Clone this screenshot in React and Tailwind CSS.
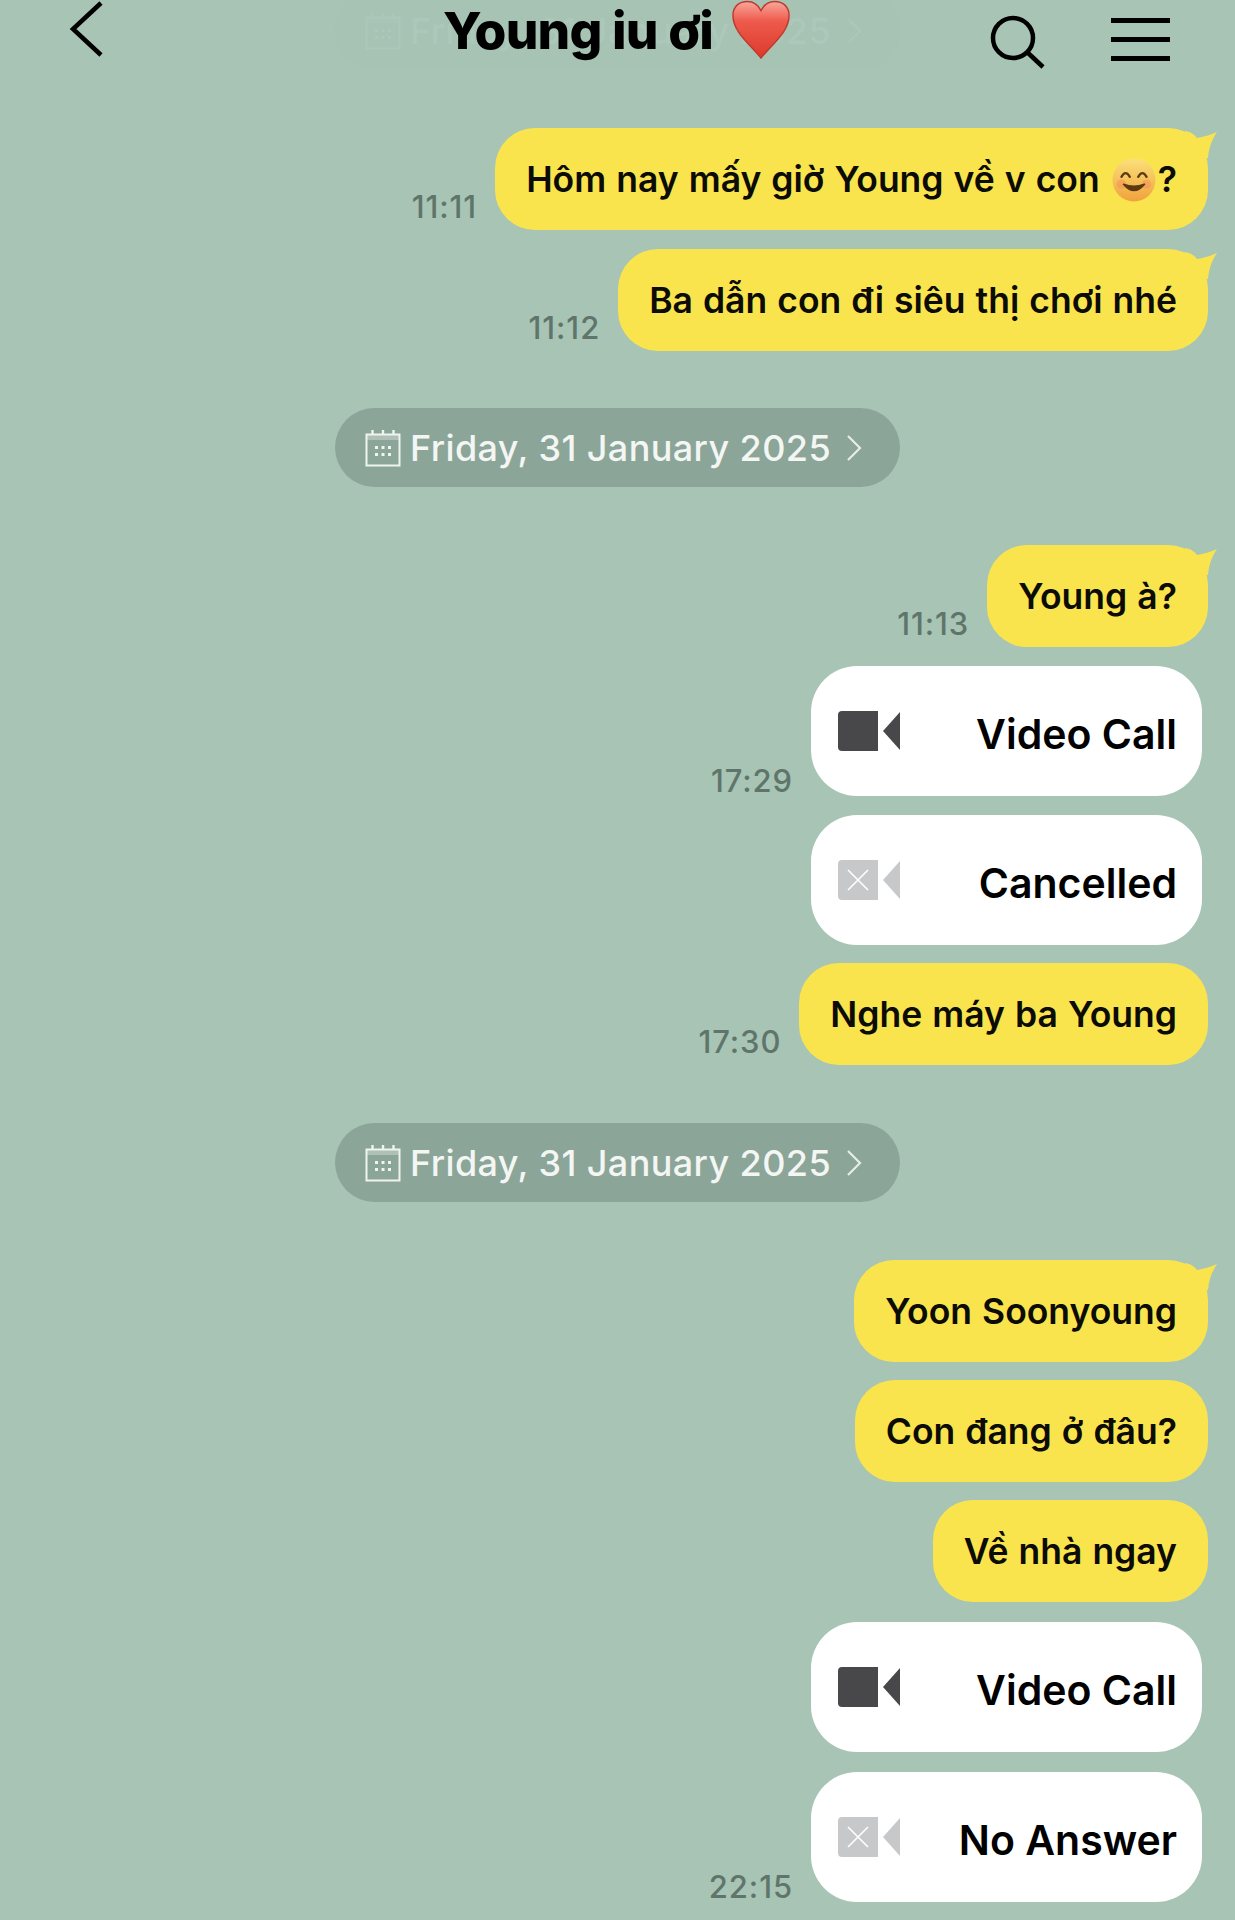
import React from "react";

function Tail() {
  return (
    <svg className="absolute right-[-9px] top-0" width="32" height="30" viewBox="0 0 32 30">
      <path d="M0 3 C6 4 10 7 12 10 C18 9 26 7 32 4 C28 10 24 18 23 30 L0 30 Z" fill="#fae44e" />
    </svg>
  );
}

function Time({ children, call }) {
  return (
    <span className={`text-[31px] leading-[36px] font-medium tracking-[0.9px] text-[#5f756b] mr-[18px] ${call ? "mb-[-3px]" : "mb-[5px]"}`}>
      {children}
    </span>
  );
}

function Bubble({ time, tail, mt, children }) {
  return (
    <div className={`flex justify-end items-end pr-[27px] ${mt}`}>
      {time && <Time>{time}</Time>}
      <div className="relative h-[102px] flex items-center px-[31px] rounded-[40px] bg-[#fae44e] text-[35.5px] font-semibold [word-spacing:1.1px] text-[#0c0c07] whitespace-nowrap">
        {tail && <Tail />}
        <span className="mt-[2px]">{children}</span>
      </div>
    </div>
  );
}

function CameraIcon({ off }) {
  const fill = off ? "#c6c8ca" : "#48484a";
  return (
    <svg width="64" height="42" viewBox="0 0 64 42">
      <path d="M5 1 H41 V41 H5 Q1 41 1 37 V5 Q1 1 5 1 Z" fill={fill} />
      <path d="M63 2 V40 L46 21 Z" fill={fill} strokeLinejoin="round" />
      {off && <path d="M11 11 L31 31 M31 11 L11 31" stroke="#fff" strokeWidth="1.6" />}
    </svg>
  );
}

function CallCard({ time, off, mt, children }) {
  return (
    <div className={`flex justify-end items-end pr-[33px] ${mt}`}>
      {time && <Time call>{time}</Time>}
      <div className="h-[130px] w-[391px] flex items-center justify-between pl-[26px] pr-[25px] rounded-[46px] bg-white text-[41px] font-semibold text-black">
        <CameraIcon off={off} />
        <span className="mt-[8px] whitespace-nowrap">{children}</span>
      </div>
    </div>
  );
}

function CalendarIcon({ color = "#f0f4f0" }) {
  return (
    <svg width="36" height="38" viewBox="0 0 36 38" fill="none">
      <path d="M1.5 5.5 H34.5 V36.5 H1.5 Z" stroke={color} strokeWidth="2" />
      <path d="M1.5 5.5 H34.5 V11 H1.5 Z" fill={color} fillOpacity="0.35" />
      <path d="M7.5 1 V6 M18 1 V6 M28.5 1 V6" stroke={color} strokeWidth="2.4" />
      <path
        d="M10 17 h3 v3 h-3 Z M16.5 17 h3 v3 h-3 Z M23 17 h3 v3 h-3 Z M10 24 h3 v3 h-3 Z M16.5 24 h3 v3 h-3 Z M23 24 h3 v3 h-3 Z"
        fill={color}
      />
    </svg>
  );
}

function DatePill({ mt }) {
  return (
    <div className={`flex justify-center ${mt}`}>
      <div className="h-[79px] w-[565px] flex items-center pl-[30px] rounded-[40px] bg-[#8ba599] text-[36px] font-medium tracking-[0.4px] text-[#f3f6f3]">
        <CalendarIcon />
        <span className="ml-[9px] whitespace-nowrap">Friday, 31 January 2025</span>
        <svg className="ml-[15px]" width="16" height="28" viewBox="0 0 16 28" fill="none">
          <path d="M2 2 L14 14 L2 26" stroke="#e6ede8" strokeWidth="2.2" />
        </svg>
      </div>
    </div>
  );
}

function Heart() {
  return (
    <svg width="58" height="60" viewBox="0 0 60 62">
      <defs>
        <linearGradient id="heartFill" x1="0" y1="0" x2="0" y2="1">
          <stop offset="0" stopColor="#f9a79b" />
          <stop offset="0.35" stopColor="#ee5a4c" />
          <stop offset="1" stopColor="#dc3a2c" />
        </linearGradient>
      </defs>
      <path
        d="M30 60 C18 45 1 33 1 16 C1 6 8 1.500 16 1.500 C22 1.500 27 5 30 11 C33 5 38 1.500 44 1.500 C52 1.500 59 6 59 16 C59 33 42 45 30 60 Z"
        fill="url(#heartFill)"
        stroke="#bf3a2e"
        strokeWidth="1.5"
      />
    </svg>
  );
}

function Smiley() {
  return (
    <svg className="inline-block align-[-10px] ml-[12px] mr-[2px]" width="44" height="44" viewBox="0 0 42 42">
      <defs>
        <linearGradient id="smileFill" x1="0" y1="0" x2="0" y2="1">
          <stop offset="0" stopColor="#fbe07a" />
          <stop offset="1" stopColor="#f0a23c" />
        </linearGradient>
      </defs>
      <circle cx="21" cy="21" r="20.5" fill="url(#smileFill)" />
      <circle cx="9" cy="25" r="4.5" fill="#f48a5a" opacity="0.45" />
      <circle cx="33" cy="25" r="4.5" fill="#f48a5a" opacity="0.45" />
      <path d="M9 18 Q13 11 17 18 M25 18 Q29 11 33 18" stroke="#5d3a12" strokeWidth="2.2" fill="none" strokeLinecap="round" />
      <path d="M11 25 Q21 37 31 25 Q21 29 11 25 Z" fill="#5d3a12" stroke="#5d3a12" strokeWidth="1.5" strokeLinejoin="round" />
    </svg>
  );
}

function Header() {
  return (
    <div className="relative h-[128px] text-black">
      {/* the date pill scrolling away under the translucent bar */}
      <div className="absolute left-[335px] top-[-9px] h-[79px] w-[565px] flex items-center pl-[30px] rounded-[40px] bg-[#a6c3b4] text-[36px] font-medium tracking-[0.4px] text-[#acc8ba]">
        <CalendarIcon color="#acc8ba" />
        <span className="ml-[9px] whitespace-nowrap">Friday, 31 January 2025</span>
        <svg className="ml-[15px]" width="16" height="28" viewBox="0 0 16 28" fill="none">
          <path d="M2 2 L14 14 L2 26" stroke="#acc8ba" strokeWidth="2.2" />
        </svg>
      </div>
      <svg className="absolute left-[68px] top-0" width="38" height="58" viewBox="0 0 38 58" fill="none">
        <path d="M33 3 L5 29 L33 55" stroke="#000" strokeWidth="4.5" />
      </svg>
      <div className="absolute left-[443px] top-0 flex items-center gap-[19px] text-[51.5px] leading-[60px] font-extrabold tracking-[-0.8px] whitespace-nowrap">
        <span>Young iu ơi</span>
        <Heart />
      </div>
      <svg className="absolute left-[990px] top-[15px]" width="56" height="54" viewBox="0 0 56 54" fill="none">
        <circle cx="23" cy="23" r="20" stroke="#000" strokeWidth="4.5" />
        <path d="M37 37 L53 52" stroke="#000" strokeWidth="4.5" />
      </svg>
      <div className="absolute left-[1111px] top-[18px] w-[59px] h-[43px] flex flex-col justify-between">
        <div className="h-[5px] bg-black" />
        <div className="h-[5px] bg-black" />
        <div className="h-[5px] bg-black" />
      </div>
    </div>
  );
}

export default function App() {
  return (
    <div className="w-[1235px] h-[1920px] overflow-hidden bg-[#a7c4b5] font-['Inter',sans-serif]">
      <Header />
      <Bubble time="11:11" tail>
        Hôm nay mấy giờ Young về v con
        <Smiley />?
      </Bubble>
      <Bubble time="11:12" tail mt="mt-[19px]">Ba dẫn con đi siêu thị chơi nhé</Bubble>
      <DatePill mt="mt-[57px]" />
      <Bubble time="11:13" tail mt="mt-[58px]">Young à?</Bubble>
      <CallCard mt="mt-[19px]" time="17:29">Video Call</CallCard>
      <CallCard mt="mt-[19px]" off>Cancelled</CallCard>
      <Bubble time="17:30" mt="mt-[18px]">Nghe máy ba Young</Bubble>
      <DatePill mt="mt-[58px]" />
      <Bubble tail mt="mt-[58px]">Yoon Soonyoung</Bubble>
      <Bubble mt="mt-[18px]">Con đang ở đâu?</Bubble>
      <Bubble mt="mt-[18px]">Về nhà ngay</Bubble>
      <CallCard mt="mt-[20px]">Video Call</CallCard>
      <CallCard mt="mt-[20px]" time="22:15" off>No Answer</CallCard>
    </div>
  );
}
